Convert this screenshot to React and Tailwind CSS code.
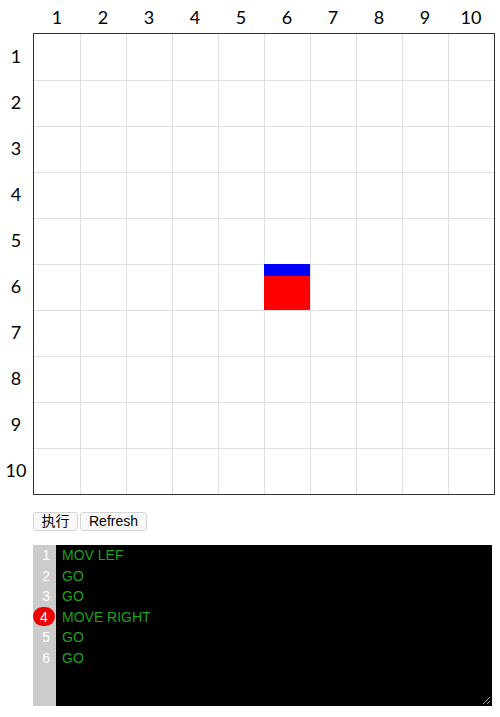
const SIZE = 10
const robot = { row: 6, col: 6 }
const code = ['MOV LEF', 'GO', 'GO', 'MOVE RIGHT', 'GO', 'GO']
const current = 4

const nums = Array.from({ length: SIZE }, (_, i) => i + 1)

export default function App() {
  return (
    <div className="w-[500px] min-h-[717px] bg-white text-black font-['Lato','Liberation_Sans',sans-serif]">
      {/* column labels */}
      <div className="flex h-[33px] pl-[34px] pt-[6px]">
        {nums.map((n) => (
          <div key={n} className="w-[46px] text-center text-[18px] leading-[22px]">
            {n}
          </div>
        ))}
      </div>

      <div className="flex">
        {/* row labels */}
        <div className="w-[33px]">
          {nums.map((n) => (
            <div key={n} className="h-[46px] flex items-center justify-center text-[18px] pr-[1px]">
              {n}
            </div>
          ))}
        </div>

        {/* board */}
        <div className="border border-[#333]">
          {nums.map((r) => (
            <div key={r} className="flex">
              {nums.map((c) => (
                <div
                  key={c}
                  className={`relative w-[46px] h-[46px] border-[#e0e0e0] ${c > 1 ? 'border-l' : ''} ${r > 1 ? 'border-t' : ''}`}
                >
                  {r === robot.row && c === robot.col && (
                    <div className="absolute -left-px -top-px w-[46px] h-[46px] flex flex-col">
                      <div className="h-[12px] bg-[#0000ff]" />
                      <div className="flex-1 bg-[#ff0000]" />
                    </div>
                  )}
                </div>
              ))}
            </div>
          ))}
        </div>
      </div>

      {/* buttons */}
      <div className="flex gap-[2px] ml-[33px] mt-[17px] font-['Liberation_Sans','Noto_Sans_CJK_SC',sans-serif] text-[14px]">
        <button className="w-[45px] h-[19px] flex items-center justify-center bg-[#f8f8f8] border border-[#d4d4d4] rounded-[3px]">
          执行
        </button>
        <button className="w-[67px] h-[19px] flex items-center justify-center bg-[#f8f8f8] border border-[#d4d4d4] rounded-[3px]">
          Refresh
        </button>
      </div>

      {/* editor */}
      <div className="relative flex ml-[33px] mt-[14px] w-[459px] h-[161px] bg-black font-['Liberation_Sans',sans-serif] text-[14px] leading-[20.5px]">
        <div className="w-[23px] bg-[#cccccc] text-white">
          {code.map((_, i) => (
            <div key={i} className="h-[20.5px] flex items-center justify-end pr-[6px]">
              {i + 1 === current ? (
                <span className="-mr-[5px] w-[22px] h-[19px] rounded-full bg-[#ee0000] flex items-center justify-center">
                  {i + 1}
                </span>
              ) : (
                i + 1
              )}
            </div>
          ))}
        </div>
        <div className="flex-1 pl-[6px] text-[#1fa01f]">
          {code.map((line, i) => (
            <div key={i} className="h-[20.5px]">
              {line}
            </div>
          ))}
        </div>
        <svg className="absolute right-[1px] bottom-[1px]" width="9" height="9" viewBox="0 0 9 9">
          <path d="M8 1 L1 8 M8 5 L5 8" stroke="#999" strokeWidth="1" />
        </svg>
      </div>
    </div>
  )
}
